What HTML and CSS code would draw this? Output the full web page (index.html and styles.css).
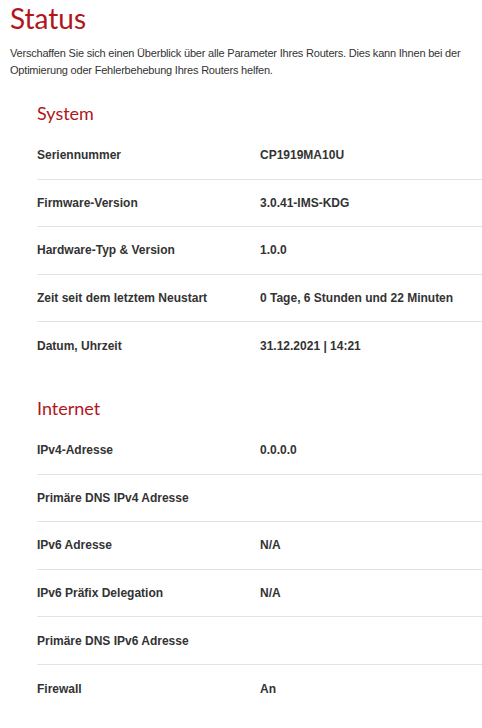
FILE: index.html
```html
<!DOCTYPE html>
<html lang="de">
<head>
<meta charset="utf-8">
<title>Status</title>
<link rel="stylesheet" href="styles.css">
</head>
<body>
<main class="page">
  <h1 class="title">Status</h1>
  <p class="intro">Verschaffen Sie sich einen Überblick über alle Parameter Ihres Routers. Dies kann Ihnen bei der Optimierung oder Fehlerbehebung Ihres Routers helfen.</p>

  <section class="section section-first">
    <h2 class="heading">System</h2>
    <div class="table">
      <div class="row"><span class="label">Seriennummer</span><span class="value">CP1919MA10U</span></div>
      <div class="row"><span class="label">Firmware-Version</span><span class="value">3.0.41-IMS-KDG</span></div>
      <div class="row"><span class="label">Hardware-Typ &amp; Version</span><span class="value">1.0.0</span></div>
      <div class="row"><span class="label">Zeit seit dem letztem Neustart</span><span class="value">0 Tage, 6 Stunden und 22 Minuten</span></div>
      <div class="row"><span class="label">Datum, Uhrzeit</span><span class="value">31.12.2021 | 14:21</span></div>
    </div>
  </section>

  <section class="section">
    <h2 class="heading">Internet</h2>
    <div class="table">
      <div class="row"><span class="label">IPv4-Adresse</span><span class="value">0.0.0.0</span></div>
      <div class="row"><span class="label">Primäre DNS IPv4 Adresse</span><span class="value"></span></div>
      <div class="row"><span class="label">IPv6 Adresse</span><span class="value">N/A</span></div>
      <div class="row"><span class="label">IPv6 Präfix Delegation</span><span class="value">N/A</span></div>
      <div class="row"><span class="label">Primäre DNS IPv6 Adresse</span><span class="value"></span></div>
      <div class="row"><span class="label">Firewall</span><span class="value">An</span></div>
    </div>
  </section>
</main>
</body>
</html>
```
FILE: styles.css
```css
* { box-sizing: border-box; }

html, body {
  margin: 0;
  padding: 0;
  background: #ffffff;
}

body {
  font-family: "Liberation Sans", Arial, sans-serif;
  color: #333333;
}

.page {
  padding: 1px 0 0 10px;
}

.title {
  margin: 0;
  font-family: Lato, "Open Sans", sans-serif;
  font-weight: 400;
  font-size: 28px;
  line-height: 34px;
  color: #b0161b;
}

.intro {
  margin: 10px 0 0 0;
  padding-right: 2px;
  font-size: 11px;
  line-height: 17px;
  letter-spacing: -0.2px;
  color: #333333;
}

.section {
  margin: 26px 0 0 27px;
}

.section-first {
  margin-top: 22px;
}

.heading {
  margin: 0 0 7px 0;
  font-family: Lato, "Open Sans", sans-serif;
  font-weight: 400;
  font-size: 18px;
  line-height: 24px;
  color: #b0161b;
}

.table {
  display: flex;
  flex-direction: column;
}

.row {
  display: grid;
  grid-template-columns: 223px 1fr;
  align-items: center;
  height: 47.6px;
  border-bottom: 1px solid #e3e3e3;
  font-size: 12px;
  font-weight: 700;
  color: #333333;
}

.row:last-child {
  border-bottom: none;
}
```
